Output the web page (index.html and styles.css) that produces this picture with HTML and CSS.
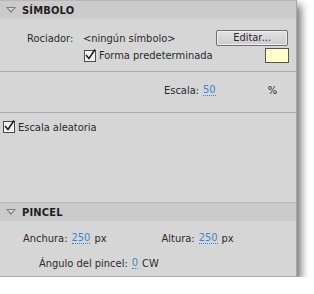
FILE: index.html
```html
<!DOCTYPE html>
<html>
<head>
<meta charset="utf-8">
<link rel="stylesheet" href="styles.css">
</head>
<body>
<div class="panel">
  <div class="hdr"><span class="tri"></span><span class="hdr-t">SÍMBOLO</span></div>
  <div class="sec sec-sym">
    <div class="row r-roc">
      <span class="lbl lbl-roc">Rociador:</span>
      <span class="val">&lt;ningún símbolo&gt;</span>
      <span class="btn">Editar...</span>
    </div>
    <div class="row r-forma">
      <span class="cb"><svg width="12" height="12" viewBox="0 0 12 12"><path d="M2 6 L5 9.5 L11 0.5" fill="none" stroke="#222" stroke-width="1.6"/></svg></span>
      <span class="lbl">Forma predeterminada</span>
      <span class="swatch"></span>
    </div>
  </div>
  <div class="sec sec-esc">
    <span class="lbl">Escala:</span>
    <span class="num n-esc">50</span>
    <span class="pct">%</span>
  </div>
  <div class="sec sec-ale">
    <div class="row r-ale">
      <span class="cb"><svg width="12" height="12" viewBox="0 0 12 12"><path d="M2 6 L5 9.5 L11 0.5" fill="none" stroke="#222" stroke-width="1.6"/></svg></span>
      <span class="lbl">Escala aleatoria</span>
    </div>
  </div>
  <div class="hdr"><span class="tri"></span><span class="hdr-t">PINCEL</span></div>
  <div class="sec sec-pin">
    <div class="row r-dim">
      <span class="lbl">Anchura:</span><span class="num n-w">250</span><span class="lbl">px</span>
      <span class="lbl l-alt">Altura:</span><span class="num n-h">250</span><span class="lbl">px</span>
    </div>
    <div class="row r-ang">
      <span class="lbl">Ángulo del pincel:</span><span class="num n-a">0</span><span class="lbl">CW</span>
    </div>
  </div>
</div>
</body>
</html>
```
FILE: styles.css
```css
html, body { margin: 0; padding: 0; background: #fff; }
body { font-family: "DejaVu Sans Condensed", "DejaVu Sans", sans-serif; font-size: 11px; color: #2a2a2a; }
.panel {
  width: 297px; height: 277px; box-sizing: border-box;
  background: #d6d6d6; border-right: 1px solid #a8a8a8; border-bottom: 1px solid #a8a8a8;
  box-shadow: 4px 5px 8px rgba(0,0,0,0.55);
  display: flex; flex-direction: column;
}
.hdr { height: 18px; background: #cbcbcb; border-top: 1px solid #b8b8b8; display: flex; align-items: center; }
.tri { width: 0; height: 0; margin-left: 6px; border-left: 5px solid transparent; border-right: 5px solid transparent; border-top: 6px solid #7a7a7a; position: relative; }
.tri::after { content: ""; position: absolute; left: -3px; top: -5px; border-left: 3px solid transparent; border-right: 3px solid transparent; border-top: 3.5px solid #dcdcdc; }
.hdr-t { font-weight: bold; margin-left: 6px; color: #1e1e1e; letter-spacing: 0.2px; }
.sec { box-sizing: border-box; border-bottom: 1px solid #a9a9a9; }
.sec-sym { height: 53px; padding-top: 11px; }
.row { display: flex; align-items: center; }
.r-roc { height: 16px; }
.lbl-roc { margin-left: 27px; width: 56px; }
.val { color: #2a2a2a; }
.btn { margin-left: auto; margin-right: 8px; width: 70px; height: 14px; border: 1px solid #6e6e6e; border-radius: 2px; background: linear-gradient(#e2e2e2, #cdcdcd); text-align: center; line-height: 14px; box-shadow: inset 0 0 0 1px #f0f0f0; }
.r-forma { height: 15px; margin-top: 2px; }
.cb { width: 10px; height: 10px; border: 1px solid #4a4a4a; background: #f2f2f2; display: inline-flex; margin-right: 3px; position: relative; }
.cb svg { position: absolute; left: -1px; top: -2px; }
.r-forma .cb { margin-left: 84px; }
.swatch { margin-left: auto; margin-right: 7px; width: 22px; height: 13px; border: 1px solid #555; background: #ffffcc; }
.sec-esc { height: 41px; display: flex; align-items: center; padding-bottom: 4px; }
.sec-esc .lbl { margin-left: 164px; }
.num { color: #3d83cc; border-bottom: 1px dotted #3d83cc; line-height: 11px; margin-left: 4px; margin-right: 4px; }
.pct { margin-left: 48px; }
.sec-ale { height: 89px; border-bottom: none; padding-top: 7px; }
.r-ale { height: 14px; }
.r-ale .cb { margin-left: 3px; }
.sec-pin { border-bottom: none; padding-top: 9px; }
.r-dim { height: 16px; }
.r-dim .lbl:first-child { margin-left: 23px; }
.l-alt { margin-left: 55px; }
.r-ang { height: 16px; margin-top: 9px; }
.r-ang .lbl:first-child { margin-left: 39px; }
```
